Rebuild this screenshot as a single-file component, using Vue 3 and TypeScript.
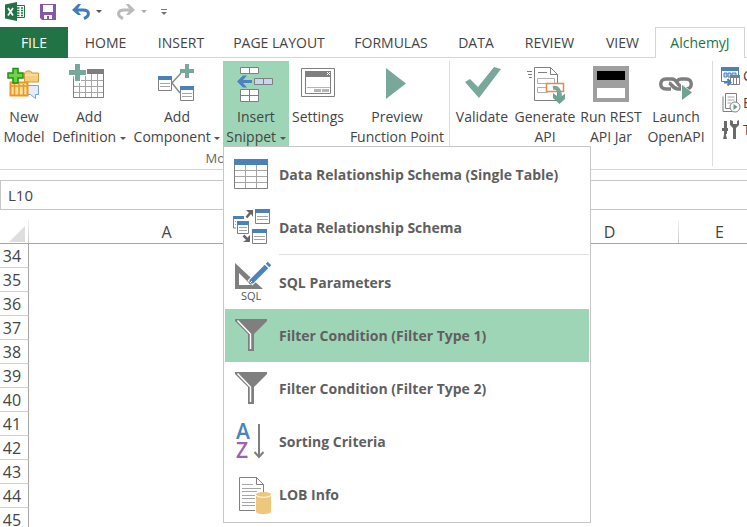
<script setup lang="ts">
import { ref } from 'vue'

interface MenuItem {
  id: string
  label: string
  separated?: boolean
}

const tabs: string[] = ['FILE', 'HOME', 'INSERT', 'PAGE LAYOUT', 'FORMULAS', 'DATA', 'REVIEW', 'VIEW', 'AlchemyJ']
const activeTab = ref('AlchemyJ')
const cellName = ref('L10')
const formula = ref('')
const highlighted = ref('filter1')

const menu: MenuItem[] = [
  { id: 'table', label: 'Data Relationship Schema (Single Table)' },
  { id: 'schema', label: 'Data Relationship Schema' },
  { id: 'sql', label: 'SQL Parameters', separated: true },
  { id: 'filter1', label: 'Filter Condition (Filter Type 1)' },
  { id: 'filter2', label: 'Filter Condition (Filter Type 2)' },
  { id: 'sort', label: 'Sorting Criteria' },
  { id: 'lob', label: 'LOB Info' },
]

const columns: string[] = ['A', 'B', 'C', 'D', 'E']
const rows: number[] = Array.from({ length: 12 }, (_, i) => 34 + i)
</script>

<template>
  <div class="app">
    <header class="quick">
      <svg class="logo" width="20" height="19" viewBox="0 0 20 19" aria-hidden="true">
        <path d="M10 3.5h9.500v12H10" fill="#fff" stroke="#217346" />
        <path d="M12 6h2.500M16 6h2M12 8.500h2.500M16 8.500h2M12 11h2.500M16 11h2M12 13.500h2.500M16 13.500h2" stroke="#217346" stroke-width="1.500" />
        <path d="M0 2.500 12 0v19L0 16.500z" fill="#217346" />
        <path d="m3 6 5 7.500M8 6l-5 7.500" stroke="#fff" stroke-width="1.800" />
      </svg>
      <button class="tool save" aria-label="Save">
        <svg width="16" height="16" viewBox="0 0 16 16"><path d="M0 0h16v16H2l-2-2z" fill="#8657a8" /><path d="M3 1h10v7H3zM4 11h8v4H9v-3H7v3H4z" fill="#fff" /></svg>
      </button>
      <button class="tool" aria-label="Undo">
        <svg width="18" height="16" viewBox="0 0 18 16"><path d="M2 6h9c7 0 7 6 1 8.500" fill="none" stroke="#3f7cb9" stroke-width="3" /><path d="M0 6 6 0h3L5 6l4 5H6z" fill="#3f7cb9" /></svg>
      </button>
      <button class="tool drop" aria-label="Undo history"><i class="caret"></i></button>
      <button class="tool redo" aria-label="Redo">
        <svg width="18" height="16" viewBox="0 0 18 16"><path d="M16 6H7C0 6 0 12 6 14.500" fill="none" stroke="#bababa" stroke-width="3" /><path d="m18 6-6-6H9l4 6-4 5h3z" fill="#bababa" /></svg>
      </button>
      <button class="tool drop" aria-label="Redo history"><i class="caret pale"></i></button>
      <button class="tool more" aria-label="Customize toolbar">
        <svg width="6" height="6" viewBox="0 0 6 6"><path d="M0 .5h6" stroke="#777" /><path d="M0 3h6L3 6z" fill="#777" /></svg>
      </button>
    </header>

    <nav class="tabs">
      <button
        v-for="tab in tabs"
        :key="tab"
        class="tab"
        :class="{ file: tab === 'FILE', active: tab === activeTab }"
        @click="activeTab = tab"
      >{{ tab }}</button>
    </nav>

    <section class="ribbon">
      <div class="group model">
        <div class="commands">
          <button class="cmd">
            <svg width="40" height="40" viewBox="0 0 40 40">
              <path d="M20.500 18V9l2-2h4l1.500 2h6.500v9z" fill="#f3cf7b" stroke="#d09a35" /><path d="M21 11h13" stroke="#fbe9b8" />
              <path d="M23.500 21.500h11v9h-3v4l-5-4h-3z" fill="#e4edfc" stroke="#7c9fd5" />
              <path d="M6.500 18.500h17v13h-17z" fill="#ffe1a0" stroke="#ee9420" stroke-width="2" /><path d="M10.500 20v12M15 20v12M19.500 20v12M6 22h18" stroke="#ee9420" stroke-width="1.500" />
              <path d="M9 4.500h5V9h5v5h-5v5H9v-5H4V9h5z" fill="#6cd343" stroke="#238b1c" stroke-width="1.500" />
            </svg>
            <span>New<br />Model</span>
          </button>
          <button class="cmd">
            <svg width="40" height="40" viewBox="0 0 40 40">
              <path d="M4.500 10v23.500h30V10M10.500 10v23M16.500 10v23M22.500 10v23M28.500 10v23M4 16.500h30M4 22.500h30M4 28.500h30" fill="none" stroke="#a5a5a5" />
              <path d="M4.500 15v18.500h30V9" fill="none" stroke="#7f7f7f" />
              <path d="M4 5h31v5H4z" fill="#7f7f7f" />
              <path d="M5 0h7v5h6v7h-6v7H5v-7H0V5h5z" fill="#fff" /><path d="M6 0h5v6h6v5h-6v6H6v-6H0V6h6z" fill="#78a89b" />
            </svg>
            <span>Add<br />Definition <i class="caret"></i></span>
          </button>
          <button class="cmd">
            <svg width="40" height="40" viewBox="0 0 40 40">
              <path d="m15 19 9-10M15 19l8 10" stroke="#8c8c8c" stroke-width="1.500" />
              <path d="M1.500 12.500h13v14h-13zM23.500 22.500h13v14h-13z" fill="#fff" stroke="#7f7f7f" /><path d="M1 12h14v4H1zM23 22h14v4H23z" fill="#4a81b8" />
              <path d="M3 19.500h10M3 22.500h10M25 29.500h10M25 32.500h10" stroke="#a5a5a5" />
              <path d="M28 0h4v5h5v4h-5v5h-4V9h-5V5h5z" fill="#78a89b" />
            </svg>
            <span>Add<br />Component <i class="caret"></i></span>
          </button>
          <div class="anchor">
            <button class="cmd open" aria-haspopup="menu" aria-expanded="true">
              <svg width="40" height="40" viewBox="0 0 40 40">
                <path d="M4.500 3.500h18v6h-18zM13.500 3.500v6M4.500 25.500h18v12h-18zM13.500 25v12M4.500 31.500h18" fill="#fff" stroke="#7f7f7f" />
                <path d="M18.500 14.500h18v6h-18zM27.500 14v6" fill="#c5d7ed" stroke="#7f7f7f" />
                <path d="m1 17.500 6-6h4l-4 4.500h9v3H7l4 4.500H7z" fill="#4a83bd" />
              </svg>
              <span>Insert<br />Snippet <i class="caret"></i></span>
            </button>
            <ul class="menu" role="menu">
              <li v-for="item in menu" :key="item.id" :class="{ separated: item.separated }" role="none">
                <button class="item" :class="{ hot: item.id === highlighted }" role="menuitem" @mouseenter="highlighted = item.id">
                  <svg width="41" height="41" viewBox="0 0 41 41" aria-hidden="true">
                    <g v-if="item.id === 'table'">
                      <path d="M2.500 6v28.500h33V6" fill="#fff" stroke="#7f7f7f" />
                      <path d="M13.500 11v23M24.500 11v23M3 16.500h32M3 22.500h32M3 28.500h32" stroke="#a5a5a5" />
                      <path d="M2 5h34v6H2z" fill="#4a81b8" />
                    </g>
                    <g v-else-if="item.id === 'schema'">
                      <path d="M1.500 11v10H4M23.500 2.500h14v14h-14zM20.500 22.500h14v14h-14zM5.500 14.500h11v12h-11z" fill="#fff" stroke="#7f7f7f" />
                      <path d="M23 2h15v4H23zM20 22h15v4H20zM5 14h12v4H5zM1 9h11v3H1z" fill="#4a81b8" />
                      <path d="M25 9.500h11M25 12.500h11M22 29.500h11M22 32.500h11M7 20.500h8M7 23.500h8M3 14.500h1M3 17.500h1" stroke="#a5a5a5" />
                      <path d="m14.500 10.500 5-6M11.500 28.500l5 5" stroke="#666" stroke-width="2.500" /><path d="M14 3h7v7l-2-3-3-2zM18 28v7h-7l3-2 2-3z" fill="#666" />
                    </g>
                    <g v-else-if="item.id === 'sql'">
                      <path d="M3 1v26h28zM7 11v12h12z" fill="#7f7f7f" fill-rule="evenodd" />
                      <path d="M18 21 38 1" stroke="#fff" stroke-width="7" />
                      <path d="M19 20 34.500 4.500" stroke="#4a83bd" stroke-width="5" /><path d="m35.500 3.500 2-2" stroke="#4a83bd" stroke-width="5" /><path d="m17 22 1-5 4 4z" fill="#4a83bd" /><path d="m18 21 2-2" stroke="#fff" />
                      <text x="9" y="38" class="sql">SQL</text>
                    </g>
                    <g v-else-if="item.id === 'filter1' || item.id === 'filter2'">
                      <path d="M3 4h32v2L22 19v17h-6V19L3 6z" fill="#7f7f7f" />
                      <path d="M5.500 5.500 18.500 19v15" fill="none" stroke="#fff" stroke-width="1.500" />
                    </g>
                    <g v-else-if="item.id === 'sort'">
                      <text x="4" y="18" class="letter blue">A</text><text x="4" y="37" class="letter purple">Z</text>
                      <path d="M27 3v33M22.500 31l4.500 5 4.500-5" fill="none" stroke="#7f7f7f" stroke-width="2" />
                    </g>
                    <g v-else>
                      <path d="M7.500 3.500h17l7 7v26h-24zM24.500 3.500v7h7" fill="#fff" stroke="#7f7f7f" />
                      <path d="M10 10.500h11M10 14.500h19M10 17.500h15M10 21.500h14M10 24.500h14M10 28.500h14M10 31.500h14" stroke="#a5a5a5" />
                      <path d="M23 18h17v23H23z" fill="#fff" /><path d="M24 20.500v17c0 3.500 15 3.500 15 0v-17c0-3.500-15-3.500-15 0z" fill="#edc77e" /><path d="M24 21c1 3 14 3 15 0" fill="none" stroke="#fff" />
                    </g>
                  </svg>
                  <span>{{ item.label }}</span>
                </button>
              </li>
            </ul>
          </div>
          <button class="cmd">
            <svg width="40" height="40" viewBox="0 0 40 40">
              <path d="M3.500 4.500h33v28h-33zM7.500 7.500h25v22h-25z" fill="#fff" stroke="#7f7f7f" />
              <path d="M7 7h26v6H7z" fill="#7f7f7f" /><path d="m29 8 3 3M32 8l-3 3" stroke="#fff" /><path d="M9 23.500h23" stroke="#b5b5b5" /><path d="M16 25h7v3h-7zM24 25h7v3h-7z" fill="#b5b5b5" />
            </svg>
            <span>Settings</span>
          </button>
          <button class="cmd">
            <svg width="40" height="40" viewBox="0 0 40 40"><path d="M9 4v31l20-15.500z" fill="#78a89b" /></svg>
            <span>Preview<br />Function Point</span>
          </button>
        </div>
        <p class="caption">Model</p>
      </div>

      <div class="group api">
        <div class="commands">
          <button class="cmd">
            <svg width="40" height="40" viewBox="0 0 40 40"><path d="m3 18 5-3 8 8L32 3l7 2-22 29z" fill="#78a89b" /></svg>
            <span>Validate</span>
          </button>
          <button class="cmd">
            <svg width="40" height="40" viewBox="0 0 40 40">
              <path d="M9.500 3.500h16l7 7v26h-23zM25.500 3.500v7h7" fill="#fff" stroke="#7f7f7f" />
              <path d="M2 7.500h5M3 10.500h4M4 13.500h3M13 8.500h9" stroke="#7f7f7f" /><path d="M12.500 14.500h17v5h-17zM12.500 23.500h10v5h-10z" fill="none" stroke="#b0b0b0" />
              <path d="M21.500 19.500h17v8h-17z" fill="#fff" stroke="#e28b4c" stroke-width="1.500" />
              <path d="M28 24c5-1 7 3 7 10" fill="none" stroke="#78a89b" stroke-width="4" /><path d="M28 29v5l6.500 6 6.500-6v-5l-6.500 5z" fill="#6ea293" />
            </svg>
            <span>Generate<br />API</span>
          </button>
          <button class="cmd">
            <svg width="40" height="40" viewBox="0 0 40 40"><path d="M2 2h36v36H2z" fill="#9f9f9f" /><path d="M6 7h28v9H6z" /><path d="M6 24h28v10H6z" fill="#fff" /></svg>
            <span>Run REST<br />API Jar</span>
          </button>
          <button class="cmd">
            <svg width="40" height="40" viewBox="0 0 40 40">
              <path d="M15 25H10c-7 0-7-10 0-10h6c4 0 4 3 7 6 2 2 4 3 6 2" fill="none" stroke="#7f7f7f" stroke-width="3.500" />
              <path d="M13 19c3 1 4 6 9 6h8c7 0 7-10 0-10h-5c-3 0-4 2-5 3" fill="none" stroke="#7f7f7f" stroke-width="3.500" />
              <path d="M25 19v19l12-9z" fill="#fff" /><path d="M26 21v15l10-7.500z" fill="#6ea293" />
            </svg>
            <span>Launch<br />OpenAPI</span>
          </button>
        </div>
      </div>

      <div class="side">
        <button class="small">
          <svg width="20" height="20" viewBox="0 0 20 20">
            <path d="M.500 1.500h17v14H.500z" fill="#fff" stroke="#4a81b8" /><path d="M0 1h18v4H0z" fill="#4a81b8" /><path d="M3 7h3v4H3zM7 7h3v4H7zM11 7h4v4h-4z" fill="#c5d7ed" stroke="#4a81b8" />
            <path d="M9.500 10.500h9v8h-9zM12.500 10v8M15.500 10v8" fill="#fff" stroke="#7f7f7f" /><path d="M9 9h10v3H9z" fill="#7f7f7f" /><path d="M3 16.500h6M6.500 13l3 3.500-3 3" fill="none" stroke="#4a81b8" stroke-width="2" />
          </svg>C
        </button>
        <button class="small">
          <svg width="20" height="20" viewBox="0 0 20 20">
            <path d="M4.500.500h11v15h-11zM2 3.500v15h9" fill="none" stroke="#7f7f7f" /><path d="M6.500 4h7M6.500 7h7M6.500 10h4" stroke="#a5a5a5" />
            <circle cx="14" cy="14" r="5" fill="#fff" stroke="#7f7f7f" /><path d="M12.500 11v6l4-3z" fill="#5b9e88" />
          </svg>E
        </button>
        <button class="small">
          <svg width="20" height="20" viewBox="0 0 20 20">
            <path d="M3 1h3v7h1v3H6v3H5v1l1 4H2l1-4v-4H1V8h2zM9 0v5l3 3v11h3V8l3-3V0l-2 1v3h-4V1z" fill="#6a6a6a" />
          </svg>T
        </button>
      </div>
    </section>

    <div class="formula">
      <input v-model="cellName" class="name" aria-label="Name box" />
      <input v-model="formula" class="expr" aria-label="Formula bar" />
    </div>

    <main class="sheet">
      <table>
        <colgroup><col class="c-head" /><col class="c-a" /><col class="c-b" /><col class="c-c" /><col class="c-d" /><col class="c-e" /></colgroup>
        <thead>
          <tr>
            <th class="corner" aria-label="Select all"><svg width="16" height="16" viewBox="0 0 16 16"><path d="M16 0v16H0z" fill="#dedede" /></svg></th>
            <th v-for="col in columns" :key="col" scope="col">{{ col }}</th>
          </tr>
        </thead>
        <tbody>
          <tr v-for="row in rows" :key="row">
            <th scope="row">{{ row }}</th>
            <td v-for="col in columns" :key="col"></td>
          </tr>
        </tbody>
      </table>
    </main>
  </div>
</template>

<style>
body {
  margin: 0;
  background: #fff;
}
</style>

<style scoped>
.app {
  display: flex;
  flex-direction: column;
  height: 100vh;
  overflow: hidden;
  color: #444;
  background: #fff;
  font-family: 'Open Sans', 'Noto Sans', sans-serif;
  font-size: 14px;
}
button {
  padding: 0;
  border: 0;
  background: none;
  color: inherit;
  font: inherit;
  white-space: nowrap;
}
svg {
  display: block;
  flex: none;
}
.quick {
  display: flex;
  align-items: center;
  height: 23px;
  padding: 0 5px 4px;
}
.tool.save { margin: 0 16px 0 15px; }
.tool.drop { margin-left: 6px; display: flex; }
.tool.redo { margin-left: 15px; }
.tool.more { margin-left: 14px; }
.caret {
  display: inline-block;
  border: 3px solid transparent;
  border-top-color: #555;
  border-bottom: 0;
  vertical-align: middle;
}
.caret.pale { border-top-color: #aaa; }
.tabs {
  display: grid;
  grid-template-columns: 68px 75px 76px 120px 104px 66px 81px 65px 90px 1fr;
  height: 31px;
  background: linear-gradient(#d4d4d4, #d4d4d4) bottom / 100% 1px no-repeat;
}
.tab.file {
  background: #217346;
  color: #fff;
}
.tab.active {
  padding-bottom: 1px;
  border: 1px solid #d4d4d4;
  border-bottom: 0;
  background: #fff;
  color: #217346;
}
.ribbon {
  display: flex;
  flex: none;
  padding-top: 3px;
  border-bottom: 1px solid #d4d4d4;
}
.group {
  flex: none;
  margin-bottom: 3px;
  border-right: 1px solid #dcdcdc;
}
.commands { display: grid; }
.model .commands {
  grid-template-columns: 46px 84px 92px 66px 58px 100px;
  padding: 0 2px 0 1px;
}
.api .commands {
  grid-template-columns: 58px 68px 64px 66px;
  padding: 0 3px;
}
.anchor { position: relative; }
.cmd {
  display: flex;
  flex-direction: column;
  align-items: center;
  gap: 3px;
  width: 100%;
  height: 85px;
  padding-top: 3px;
  line-height: 20px;
  text-align: center;
}
.cmd.open { background: #9fd5b7; }
.caption {
  margin: 0;
  padding-top: 4px;
  font-size: 13px;
  line-height: 16px;
  text-align: center;
  color: #666;
}
.side {
  flex: none;
  padding: 1px 0 0 8px;
}
.small {
  display: flex;
  align-items: center;
  gap: 2px;
  height: 27px;
}
.menu {
  position: absolute;
  z-index: 2;
  top: 100%;
  left: 0;
  width: 364px;
  margin: 0;
  padding: 1px;
  border: 1px solid #c6c6c6;
  background: #fff;
  list-style: none;
}
.separated {
  padding-top: 2px;
  background: linear-gradient(#e1e1e1, #e1e1e1) 54px 0 / 100% 1px no-repeat;
}
.item {
  display: flex;
  align-items: center;
  gap: 6px;
  width: 100%;
  height: 53px;
  padding-left: 7px;
  font-weight: 700;
  color: #5f5f5f;
  text-align: left;
}
.item.hot { background: #9fd5b7; }
.sql { font-size: 11px; font-weight: 400; fill: #555; }
.letter { font-size: 21px; font-weight: 600; }
.blue { fill: #4a83bd; }
.purple { fill: #9a63b5; }
.formula {
  display: flex;
  flex: none;
  margin-top: 10px;
  border: 1px solid #c6c6c6;
  border-right: 0;
}
.formula input {
  min-width: 0;
  height: 28px;
  box-sizing: border-box;
  padding: 0 7px;
  border: 0;
  background: #fff;
  color: #444;
  font: inherit;
  font-size: 15px;
  outline: 0;
}
.name { flex: 0 0 260px; }
.expr { flex: 1; }
.sheet {
  flex: 1;
  min-height: 0;
  padding-top: 10px;
  overflow: hidden;
}
table {
  width: 760px;
  table-layout: fixed;
  border-collapse: separate;
  border-spacing: 0;
}
.c-head { width: 29px; }
.c-a { width: 275px; }
.c-b, .c-c { width: 118px; }
.c-d { width: 139px; }
.c-e { width: 81px; }
th, td {
  box-sizing: border-box;
  height: 24px;
  padding: 0;
  line-height: 20px;
  font-size: 16px;
  font-weight: 400;
}
thead th {
  border-bottom: 1px solid #a6a6a6;
  background: linear-gradient(#f2f2f2, #c8c8c8) right / 1px 100% no-repeat;
}
.corner svg { margin: 4px 0 0 9px; }
tbody th {
  padding-right: 4px;
  border-right: 1px solid #a6a6a6;
  border-bottom: 1px solid #cfcfcf;
}
</style>
